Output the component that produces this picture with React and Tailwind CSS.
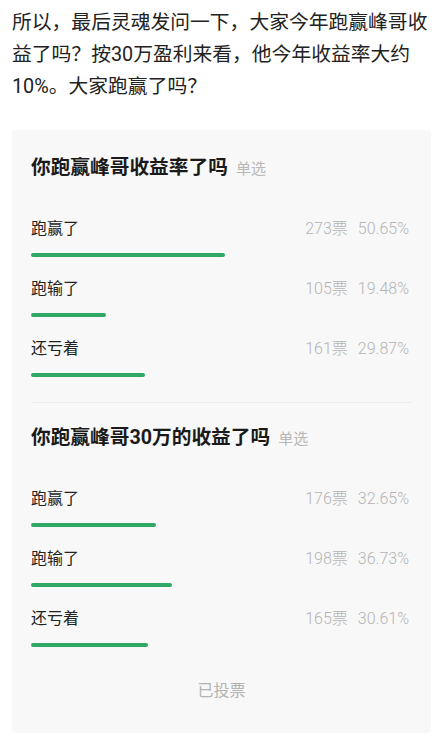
const polls = [
  {
    title: '你跑赢峰哥收益率了吗',
    options: [
      { label: '跑赢了', votes: 273, pct: 50.65 },
      { label: '跑输了', votes: 105, pct: 19.48 },
      { label: '还亏着', votes: 161, pct: 29.87 },
    ],
  },
  {
    title: '你跑赢峰哥30万的收益了吗',
    options: [
      { label: '跑赢了', votes: 176, pct: 32.65 },
      { label: '跑输了', votes: 198, pct: 36.73 },
      { label: '还亏着', votes: 165, pct: 30.61 },
    ],
  },
];

function Poll({ poll }) {
  return (
    <div>
      <div className="flex items-baseline gap-[8px]">
        <h3 className="text-[19.7px] leading-[28px] font-bold text-[#1a1a1a]">{poll.title}</h3>
        <span className="text-[15px] text-[#b8b8b8]">单选</span>
      </div>
      {poll.options.map((opt, idx) => (
        <div key={idx} className={idx === 0 ? 'mt-[35px]' : 'mt-[20px]'}>
          <div className="flex items-center justify-between pr-[3px]">
            <span className="text-[16px] leading-[24px] text-[#222]">{opt.label}</span>
            <span className="text-[16px] leading-[24px] text-[#b5b5b5] font-light">
              {opt.votes}票<span className="ml-[10px]">{opt.pct.toFixed(2)}%</span>
            </span>
          </div>
          <div className="mt-[12px] w-[383px] h-[4px]">
            <div
              className="h-full rounded-full bg-[#2fa866]"
              style={{ width: `${opt.pct}%` }}
            />
          </div>
        </div>
      ))}
    </div>
  );
}

export default function App() {
  return (
    <div
      className="bg-white w-[441px] min-h-[743px] pb-[10px]"
      style={{ fontFamily: 'Roboto, "Noto Sans CJK SC", sans-serif' }}
    >
      <p className="px-[12px] pt-[7px] text-[19.8px] leading-[32px] text-[#222]">
        所以，最后灵魂发问一下，大家今年跑赢峰哥收益了吗？按30万盈利来看，他今年收益率大约10%。大家跑赢了吗？
      </p>

      <div className="mt-[27px] ml-[12px] w-[419px] bg-[#f8f8f8] rounded-[4px] pl-[19px] pr-[19px] pt-[24px] pb-[30px]">
        <Poll poll={polls[0]} />
        <div className="mt-[25px] mb-[21px] h-px bg-[#ececec]" />
        <Poll poll={polls[1]} />
        <div className="mt-[32px] text-center text-[16px] leading-[24px] text-[#b3b3b3]">已投票</div>
      </div>
    </div>
  );
}
